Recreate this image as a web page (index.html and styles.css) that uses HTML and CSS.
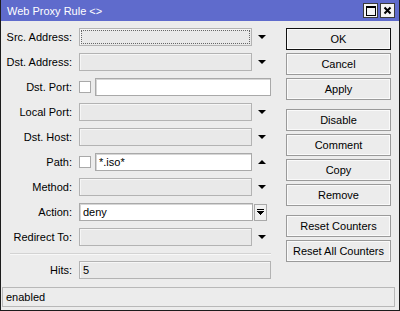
FILE: index.html
```html
<!DOCTYPE html>
<html lang="en">
<head>
    <meta charset="UTF-8">
    <title>Web Proxy Rule</title>
    <link rel="stylesheet" href="styles.css">
</head>
<body>
    <div class="window">
        <div class="titlebar">
            <span class="title">Web Proxy Rule &lt;&gt;</span>
            <div class="title-btns">
                <span class="tbtn">
                    <svg width="11" height="11" viewBox="0 0 11 11" shape-rendering="crispEdges">
                        <rect x="1" y="1" width="9" height="9" fill="none" stroke="#000" stroke-width="1"/>
                        <rect x="1" y="1" width="9" height="2" fill="#000"/>
                    </svg>
                </span>
                <span class="tbtn">
                    <svg width="11" height="11" viewBox="0 0 11 11">
                        <path d="M2.5 2.5 L8.5 8.5 M8.5 2.5 L2.5 8.5" stroke="#000" stroke-width="2"/>
                    </svg>
                </span>
            </div>
        </div>

        <div class="content">
            <div class="form">
                <div class="row">
                    <label>Src. Address:</label>
                    <div class="ctl"><span class="field off combo focus"></span><span class="arrow down"></span></div>
                </div>
                <div class="row">
                    <label>Dst. Address:</label>
                    <div class="ctl"><span class="field off combo"></span><span class="arrow down"></span></div>
                </div>
                <div class="row">
                    <label>Dst. Port:</label>
                    <div class="ctl"><span class="check"></span><span class="field text"></span></div>
                </div>
                <div class="row">
                    <label>Local Port:</label>
                    <div class="ctl"><span class="field off combo"></span><span class="arrow down"></span></div>
                </div>
                <div class="row">
                    <label>Dst. Host:</label>
                    <div class="ctl"><span class="field off combo"></span><span class="arrow down"></span></div>
                </div>
                <div class="row">
                    <label>Path:</label>
                    <div class="ctl"><span class="check"></span><span class="field text short">*.iso*</span><span class="arrow up"></span></div>
                </div>
                <div class="row">
                    <label>Method:</label>
                    <div class="ctl"><span class="field off combo"></span><span class="arrow down"></span></div>
                </div>
                <div class="row">
                    <label>Action:</label>
                    <div class="ctl">
                        <span class="field action">deny</span>
                        <span class="drop-btn">
                            <svg width="7" height="7" viewBox="0 0 7 7" shape-rendering="crispEdges">
                                <rect x="0" y="0" width="7" height="1" fill="#000"/>
                                <rect x="0" y="2" width="7" height="1" fill="#000"/>
                                <rect x="1" y="3" width="5" height="1" fill="#000"/>
                                <rect x="2" y="4" width="3" height="1" fill="#000"/>
                                <rect x="3" y="5" width="1" height="1" fill="#000"/>
                            </svg>
                        </span>
                    </div>
                </div>
                <div class="row">
                    <label>Redirect To:</label>
                    <div class="ctl"><span class="field off combo"></span><span class="arrow down"></span></div>
                </div>

                <div class="sep"></div>

                <div class="row">
                    <label>Hits:</label>
                    <div class="ctl"><span class="field off full">5</span></div>
                </div>
            </div>

            <div class="buttons">
                <div class="group">
                    <span class="btn default">OK</span>
                    <span class="btn">Cancel</span>
                    <span class="btn">Apply</span>
                </div>
                <div class="group">
                    <span class="btn">Disable</span>
                    <span class="btn">Comment</span>
                    <span class="btn">Copy</span>
                    <span class="btn">Remove</span>
                </div>
                <div class="group">
                    <span class="btn">Reset Counters</span>
                    <span class="btn">Reset All Counters</span>
                </div>
            </div>
        </div>

        <div class="status">enabled</div>
    </div>
</body>
</html>
```

FILE: styles.css
```css
body {
    margin: 0;
    font-family: 'Liberation Sans', Arial, sans-serif;
    font-size: 11px;
    color: #000;
    background: #ececec;
}

.window {
    width: 400px;
    height: 311px;
    box-sizing: border-box;
    border: 1px solid #1c1c1c;
    border-top: none;
    background: #ececec;
}

.titlebar {
    height: 21px;
    background: #5f6bcc;
    display: flex;
    align-items: center;
    justify-content: space-between;
    padding: 0 4px 0 6px;
}

.title {
    color: #fff;
    font-size: 11px;
}

.title-btns {
    display: flex;
    gap: 2px;
}

.tbtn {
    width: 15px;
    height: 15px;
    box-sizing: border-box;
    background: #f4f4f4;
    border: 1px solid #3a3a3a;
    display: flex;
    align-items: center;
    justify-content: center;
}

.content {
    display: flex;
    padding-top: 7px;
}

.form {
    width: 270px;
}

.row {
    display: flex;
    align-items: center;
    height: 18px;
    margin-bottom: 7px;
}

.row:last-child {
    margin-bottom: 0;
}

.row label {
    width: 71px;
    text-align: right;
    margin-right: 7px;
}

.ctl {
    width: 192px;
    display: flex;
    align-items: center;
}

.field {
    position: relative;
    height: 18px;
    box-sizing: border-box;
    border: 1px solid #a9a9a9;
    box-shadow: inset 1px 1px 0 #d6d6d6;
    background: #fff;
    padding: 0 3px;
    line-height: 16px;
}

.field.off {
    background: #e9e9e9;
    border-color: #b3b3b3;
    box-shadow: inset 1px 1px 0 #f6f6f6;
}

.combo {
    width: 173px;
}

.text {
    width: 176px;
}

.text.short {
    width: 157px;
}

.action {
    width: 174px;
}

.full {
    width: 192px;
}

.focus::after {
    content: "";
    position: absolute;
    top: 1px;
    left: 1px;
    right: 1px;
    bottom: 1px;
    border: 1px dotted #666;
}

.check {
    width: 12px;
    height: 12px;
    box-sizing: border-box;
    border: 1px solid #a9a9a9;
    background: #fff;
    margin-right: 4px;
}

.arrow {
    flex: 1;
    display: flex;
    justify-content: center;
}

.arrow::before {
    content: "";
    width: 0;
    height: 0;
    border-left: 4px solid transparent;
    border-right: 4px solid transparent;
}

.arrow.down::before {
    border-top: 4px solid #000;
}

.arrow.up::before {
    border-bottom: 4px solid #000;
}

.drop-btn {
    width: 13px;
    height: 17px;
    margin-left: 1px;
    box-sizing: border-box;
    border: 1px solid #a9a9a9;
    background: #f0f0f0;
    display: flex;
    align-items: center;
    justify-content: center;
}

.sep {
    height: 1px;
    background: #d3d3d3;
    border-bottom: 1px solid #f8f8f8;
    margin: 0 0 6px 9px;
}

.buttons {
    margin-left: 15px;
    width: 105px;
}

.group {
    display: flex;
    flex-direction: column;
    gap: 3px;
    margin-bottom: 9px;
}

.btn {
    height: 22px;
    box-sizing: border-box;
    border: 1px solid #9a9a9a;
    box-shadow: inset 0 0 0 1px #fafafa;
    background: #ececec;
    display: flex;
    align-items: center;
    justify-content: center;
}

.btn.default {
    border-color: #111;
}

.status {
    margin: 8px 4px 0 1px;
    height: 20px;
    box-sizing: border-box;
    border: 1px solid #b8b8b8;
    padding-left: 3px;
    line-height: 18px;
}
```
